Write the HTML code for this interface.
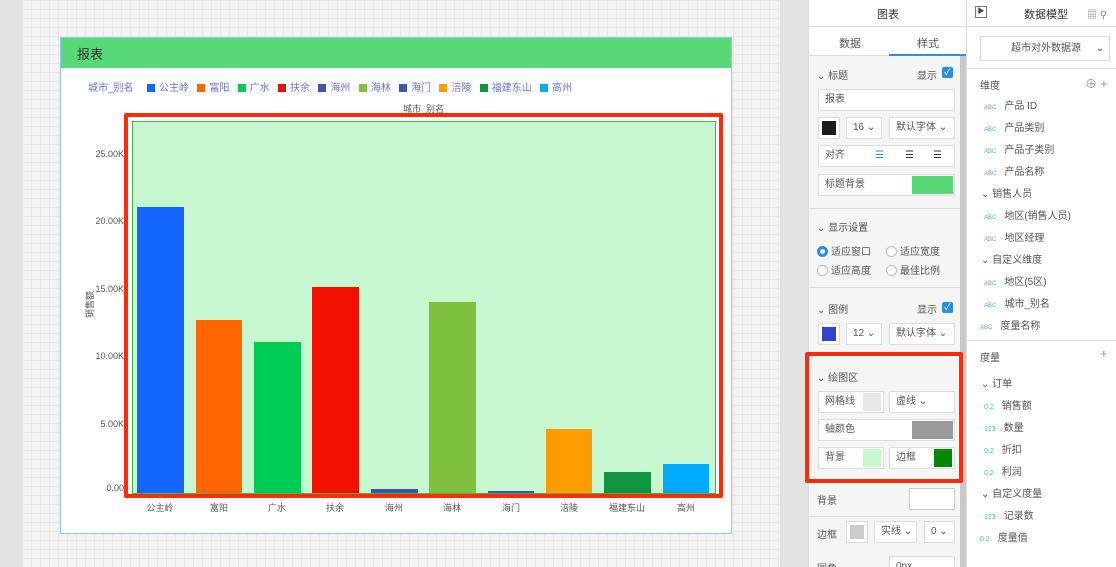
<!DOCTYPE html>
<html><head><meta charset="utf-8"><style>
*{box-sizing:border-box;margin:0;padding:0}
html,body{width:1116px;height:567px;overflow:hidden}
body{position:relative;background:#e3e3e3;font-family:"Liberation Sans","Noto Sans CJK SC",sans-serif;font-size:11px;color:#444}
.a{position:absolute}
.grid{left:22px;top:0;width:758px;height:567px;background-color:#f3f3f3;background-image:linear-gradient(#e8e8e8 1px,transparent 1px),linear-gradient(90deg,#e8e8e8 1px,transparent 1px);background-size:9px 9px}
.card{left:60px;top:37px;width:672px;height:497px;background:#fff;border:1px solid #8ec6f5}
.h{left:0;top:0;width:670px;height:30px;background:#58d878;font-size:13px;color:#333;padding:6px 16px}
.lg{top:41px;font-size:10px;color:#6a72d8}
.sq{display:inline-block;width:8px;height:8px;margin-right:4px;vertical-align:-1px}
.bar{position:absolute;bottom:0}
.yl{font-size:9px;color:#555;text-align:right;width:50px;left:76px}
.xl{font-size:9px;color:#555;top:501px;width:60px;text-align:center}
.p1{left:808px;top:0;width:158px;height:567px;background:#f5f5f5;border-left:1px solid #ddd}
.p2{left:966px;top:0;width:150px;height:567px;background:#fff;border-left:1px solid #ddd}
.in{position:absolute;background:#fff;border:1px solid #ddd;height:22px;font-size:10px;line-height:20px;padding:0 6px;color:#555;white-space:nowrap}
.t{position:absolute;font-size:10px;color:#555;white-space:nowrap}
.sw{position:absolute;border:1px solid #ccc}
.abc{font-size:6px;color:#5aa5f0;margin-right:8px}
.num{font-size:7px;color:#3cc8a8;margin-right:8px}
.rd{display:inline-block;width:11px;height:11px;border:1px solid #bbb;border-radius:50%;background:#fff;vertical-align:-2px;margin-right:3px}
.cb{position:absolute;width:11px;height:11px;background:#2d8cf0;border-radius:2px;color:#fff;font-size:9px;line-height:11px;text-align:center}
.sep{position:absolute;left:0;width:150px;height:1px;background:#ddd}
</style></head><body>
<div class="a grid"></div>
<div class="a" style="left:780px;top:0;width:28px;height:567px;background:#e3e3e3"></div>
<div class="a card">
 <div class="a h">报表</div>
 <div class="a lg" style="left:27px">城市_别名</div>
 <div class="a lg" style="left:86px;white-space:nowrap">
 <span class="sq" style="background:#1565ff"></span>公主岭&nbsp;&nbsp;&nbsp;<span class="sq" style="background:#ff6600"></span>富阳&nbsp;&nbsp;&nbsp;<span class="sq" style="background:#00cc55"></span>广水&nbsp;&nbsp;&nbsp;<span class="sq" style="background:#ee1100"></span>扶余&nbsp;&nbsp;&nbsp;<span class="sq" style="background:#3f55b0"></span>海州&nbsp;&nbsp;&nbsp;<span class="sq" style="background:#80c040"></span>海林&nbsp;&nbsp;&nbsp;<span class="sq" style="background:#3f55b0"></span>海门&nbsp;&nbsp;&nbsp;<span class="sq" style="background:#ff9c00"></span>涪陵&nbsp;&nbsp;&nbsp;<span class="sq" style="background:#119440"></span>福建东山&nbsp;&nbsp;&nbsp;<span class="sq" style="background:#00aaff"></span>高州</div>
 <div class="a" style="left:342px;top:64px;font-size:9px;color:#555">城市_别名</div>
 <div class="a" style="left:15px;top:260px;font-size:9px;color:#555;transform:rotate(-90deg)">销售额</div>
</div>
<div class="a yl" style="top:149px;left:74px">25.00K</div>
<div class="a yl" style="top:216px;left:74px">20.00K</div>
<div class="a yl" style="top:284px;left:74px">15.00K</div>
<div class="a yl" style="top:351px;left:74px">10.00K</div>
<div class="a yl" style="top:419px;left:74px">5.00K</div>
<div class="a yl" style="top:483px;left:74px">0.00</div>
<div class="a" style="left:124px;top:113px;width:599px;height:385px;border:4px solid #ff2a0a;border-radius:2px;background:#fff"></div>
<div class="a" style="left:132px;top:121px;width:584px;height:373px;background:#c6f7cf;border:1px solid #50b050">
 <div class="bar" style="left:4px;width:47px;height:286px;background:#1565ff"></div>
 <div class="bar" style="left:63px;width:46px;height:173px;background:#ff6600"></div>
 <div class="bar" style="left:121px;width:47px;height:151px;background:#00cc55"></div>
 <div class="bar" style="left:179px;width:47px;height:206px;background:#ee1100"></div>
 <div class="bar" style="left:238px;width:47px;height:4px;background:#3f55b0"></div>
 <div class="bar" style="left:296px;width:47px;height:191px;background:#80c040"></div>
 <div class="bar" style="left:355px;width:46px;height:2px;background:#3f55b0"></div>
 <div class="bar" style="left:413px;width:46px;height:64px;background:#ff9c00"></div>
 <div class="bar" style="left:471px;width:47px;height:21px;background:#119440"></div>
 <div class="bar" style="left:530px;width:46px;height:29px;background:#00aaff"></div>
</div>
<div class="a xl" style="left:130px">公主岭</div><div class="a xl" style="left:189px">富阳</div><div class="a xl" style="left:247px">广水</div><div class="a xl" style="left:305px">扶余</div><div class="a xl" style="left:364px">海州</div><div class="a xl" style="left:422px">海林</div><div class="a xl" style="left:481px">海门</div><div class="a xl" style="left:539px">涪陵</div><div class="a xl" style="left:597px">福建东山</div><div class="a xl" style="left:656px">高州</div>

<div class="a p1">
 <div class="a" style="left:0;top:0;width:158px;height:27px;background:#fff;border-bottom:1px solid #ddd;text-align:center;font-size:11px;padding-top:6px;color:#333">图表</div>
 <div class="a" style="left:0;top:27px;width:158px;height:29px;background:#fff;border-bottom:1px solid #ddd"></div>
 <div class="t" style="left:30px;top:35px;font-size:11px">数据</div>
 <div class="t" style="left:108px;top:35px;font-size:11px">样式</div>
 <div class="a" style="left:80px;top:54px;width:78px;height:2px;background:#2d8cf0"></div>
 <div class="a" style="left:151px;top:56px;width:6px;height:511px;background:#c8c8c8"></div>
 <div class="t" style="left:8px;top:67px">⌄ 标题</div><div class="t" style="left:108px;top:67px">显示</div><div class="cb" style="left:133px;top:67px">✓</div>
 <div class="in" style="left:9px;top:89px;width:137px">报表</div>
 <div class="in" style="left:9px;top:117px;width:22px;padding:3px"><div style="width:14px;height:14px;background:#1a1a1a"></div></div>
 <div class="in" style="left:37px;top:117px;width:36px">16 ⌄</div>
 <div class="in" style="left:80px;top:117px;width:66px">默认字体 ⌄</div>
 <div class="in" style="left:9px;top:145px;width:137px">对齐<span style="position:absolute;left:56px;color:#2d8cf0">☰</span><span style="position:absolute;left:86px;color:#333">☰</span><span style="position:absolute;left:114px;color:#333">☰</span></div>
 <div class="in" style="left:9px;top:174px;width:137px">标题背景<div class="a" style="left:93px;top:1px;width:41px;height:18px;background:#58d878"></div></div>
 <div class="a" style="left:0;top:208px;width:151px;height:1px;background:#ddd"></div>
 <div class="t" style="left:8px;top:219px">⌄ 显示设置</div>
 <div class="t" style="left:8px;top:243px"><span class="rd" style="border:3px solid #2d8cf0"></span>适应窗口</div>
 <div class="t" style="left:77px;top:243px"><span class="rd"></span>适应宽度</div>
 <div class="t" style="left:8px;top:262px"><span class="rd"></span>适应高度</div>
 <div class="t" style="left:77px;top:262px"><span class="rd"></span>最佳比例</div>
 <div class="a" style="left:0;top:287px;width:151px;height:1px;background:#ddd"></div>
 <div class="t" style="left:8px;top:301px">⌄ 图例</div><div class="t" style="left:108px;top:301px">显示</div><div class="cb" style="left:133px;top:302px">✓</div>
 <div class="in" style="left:9px;top:323px;width:22px;padding:3px"><div style="width:14px;height:14px;background:#3344cc"></div></div>
 <div class="in" style="left:37px;top:323px;width:36px">12 ⌄</div>
 <div class="in" style="left:80px;top:323px;width:66px">默认字体 ⌄</div>
 <div class="a" style="left:-4px;top:352px;width:158px;height:131px;border:4px solid #ff2a0a;border-radius:2px"></div>
 <div class="t" style="left:8px;top:369px">⌄ 绘图区</div>
 <div class="in" style="left:9px;top:391px;width:66px">网格线<div class="a" style="left:44px;top:1px;width:18px;height:18px;background:#e8e8e8"></div></div>
 <div class="in" style="left:80px;top:391px;width:66px">虚线 ⌄</div>
 <div class="in" style="left:9px;top:419px;width:137px">轴颜色<div class="a" style="left:93px;top:1px;width:41px;height:18px;background:#9a9a9a"></div></div>
 <div class="in" style="left:9px;top:447px;width:66px">背景<div class="a" style="left:44px;top:1px;width:18px;height:18px;background:#c6f7cf"></div></div>
 <div class="in" style="left:80px;top:447px;width:66px">边框<div class="a" style="left:44px;top:1px;width:18px;height:18px;background:#008800"></div></div>
 <div class="t" style="left:8px;top:492px">背景</div>
 <div class="sw" style="left:100px;top:488px;width:46px;height:22px;background:#fff"></div>
 <div class="a" style="left:0;top:516px;width:151px;height:1px;background:#ddd"></div>
 <div class="t" style="left:8px;top:526px">边框</div>
 <div class="in" style="left:37px;top:521px;width:22px;padding:3px"><div style="width:14px;height:14px;background:#ccc"></div></div>
 <div class="in" style="left:65px;top:521px;width:43px">实线 ⌄</div>
 <div class="in" style="left:115px;top:521px;width:31px">0 ⌄</div>
 <div class="t" style="left:8px;top:560px">圆角</div>
 <div class="in" style="left:80px;top:556px;width:66px">0px</div>
</div>

<div class="a p2">
 <div class="a" style="left:0;top:0;width:150px;height:27px;border-bottom:1px solid #ddd"></div>
 <div class="a" style="left:8px;top:6px;width:12px;height:12px;border:1px solid #777;font-size:7px;line-height:10px;text-align:center">▶</div>
 <div class="t" style="left:57px;top:6px;font-size:11px;color:#333">数据模型</div>
 <div class="t" style="left:120px;top:6px;color:#888">▦ ⚲</div>
 <div class="in" style="left:13px;top:36px;width:130px;height:25px;line-height:23px;padding:0 0 0 30px">超市对外数据源 <span style="margin-left:12px">⌄</span></div>
 <div class="sep" style="top:68px"></div>
 <div class="t" style="left:13px;top:77px">维度</div><div class="t" style="left:118px;top:75px;color:#999;font-size:12px">⊕ +</div>
 <div class="t" style="left:17px;top:97px"><span class="abc">ABC</span>产品 ID</div>
 <div class="t" style="left:17px;top:119px"><span class="abc">ABC</span>产品类别</div>
 <div class="t" style="left:17px;top:141px"><span class="abc">ABC</span>产品子类别</div>
 <div class="t" style="left:17px;top:163px"><span class="abc">ABC</span>产品名称</div>
 <div class="t" style="left:14px;top:185px">⌄ 销售人员</div>
 <div class="t" style="left:17px;top:207px"><span class="abc">ABC</span>地区(销售人员)</div>
 <div class="t" style="left:17px;top:229px"><span class="abc">ABC</span>地区经理</div>
 <div class="t" style="left:14px;top:251px">⌄ 自定义维度</div>
 <div class="t" style="left:17px;top:273px"><span class="abc">ABC</span>地区(5区)</div>
 <div class="t" style="left:17px;top:295px"><span class="abc">ABC</span>城市_别名</div>
 <div class="t" style="left:13px;top:317px"><span class="abc">ABC</span>度量名称</div>
 <div class="sep" style="top:340px"></div>
 <div class="t" style="left:13px;top:349px">度量</div><div class="t" style="left:133px;top:346px;color:#999;font-size:13px">+</div>
 <div class="t" style="left:14px;top:375px">⌄ 订单</div>
 <div class="t" style="left:17px;top:397px"><span class="num">0.2</span>销售额</div>
 <div class="t" style="left:17px;top:419px"><span class="num">123</span>数量</div>
 <div class="t" style="left:17px;top:441px"><span class="num">0.2</span>折扣</div>
 <div class="t" style="left:17px;top:463px"><span class="num">0.2</span>利润</div>
 <div class="t" style="left:14px;top:485px">⌄ 自定义度量</div>
 <div class="t" style="left:17px;top:507px"><span class="num">123</span>记录数</div>
 <div class="t" style="left:13px;top:529px"><span class="num">0.2</span>度量值</div>
</div>
</body></html>
